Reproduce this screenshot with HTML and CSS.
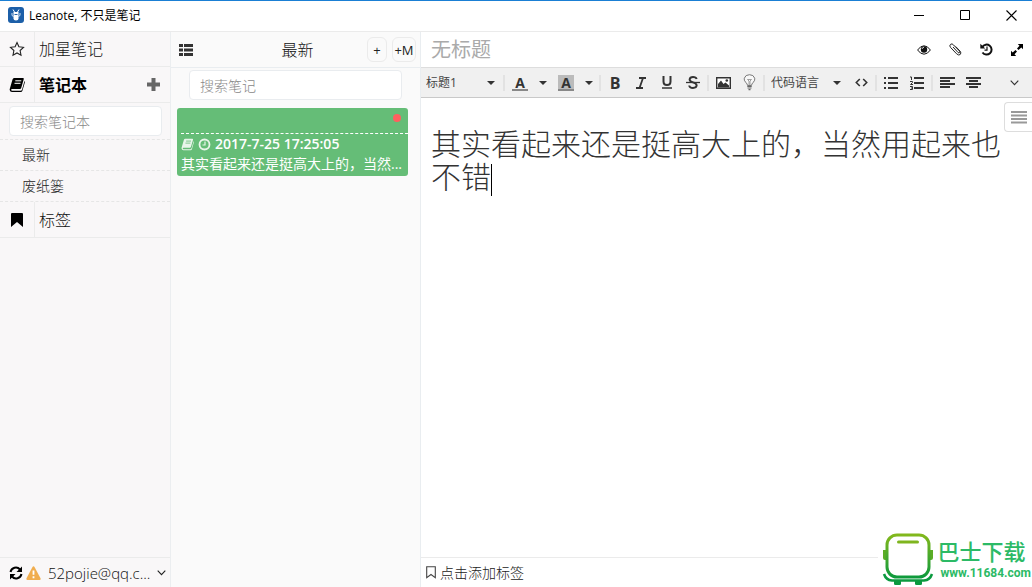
FILE: index.html
```html
<!DOCTYPE html>
<html lang="zh-CN">
<head>
<meta charset="utf-8">
<title>Leanote, 不只是笔记</title>
<link rel="stylesheet" href="styles.css">
</head>
<body>
<div class="app">
  <header class="titlebar">
    <svg class="app-logo" width="16" height="16" viewBox="0 0 16 16"><rect width="16" height="16" rx="3" fill="#1c5fa8"/><path d="M5 2.500l1.500 2.500M11 2.500l-1.500 2.500" stroke="#fff" stroke-width="1"/><path d="M5.500 5h5v6.500q0 2-2.500 2t-2.500-2z" fill="#fff"/><path d="M4 6v2.500l1.500 1M12 6v2.500l-1.500 1" fill="none" stroke="#fff" stroke-width=".8"/><path d="M6.500 7.500h3" stroke="#1c5fa8"/></svg>
    <h1 class="app-name">Leanote, 不只是笔记</h1>
    <div class="win-btns">
      <button class="win-btn" aria-label="最小化"><svg width="11" height="11"><path d="M0 5.500h10" stroke="#000"/></svg></button>
      <button class="win-btn" aria-label="最大化"><svg width="11" height="11"><path d="M.5.500h9v9h-9z" fill="none" stroke="#000"/></svg></button>
      <button class="win-btn" aria-label="关闭"><svg width="11" height="11"><path d="M.5.500l10 10M10.500.500l-10 10" stroke="#000" stroke-width="1.100"/></svg></button>
    </div>
  </header>

  <div class="columns">
    <nav class="sidebar">
      <div class="nav-row">
        <span class="nav-icon"><svg width="16" height="16" viewBox="0 0 16 16"><path d="M8 1.500l1.900 4.300 4.600.5-3.400 3.200.9 4.700L8 11.900l-4 2.300.9-4.700L1.500 6.300l4.600-.5z" fill="none" stroke="#222" stroke-width="1.100"/></svg></span>
        <a class="nav-label" href="#">加星笔记</a>
      </div>
      <div class="nav-row nav-row-active">
        <span class="nav-icon"><svg width="16" height="16" viewBox="0 0 16 16"><path d="M5 1h9q1 0 .8 1l-2.600 9q-.3 1-1.300 1H3q-1 .2-.8 1t1 .7h8.500q1 0 1.300-1L15.500 4q.6.500.4 1.200l-2.500 8.500q-.4 1.300-1.700 1.300H3q-2 0-2.300-2-.1-.7.100-1.300L3.500 2.500Q4 1 5 1z" fill="#000"/><path d="M6.300 3.800h6M5.500 6.300h6" stroke="#fff"/></svg></span>
        <a class="nav-label" href="#">笔记本</a>
        <button class="add-btn" aria-label="新建笔记本"><svg width="13" height="13"><path d="M4.500 0h4v4.500H13v4H8.500V13h-4V8.500H0v-4h4.500z" fill="#666"/></svg></button>
      </div>
      <div class="notebook-search"><input class="search" type="text" placeholder="搜索笔记本" aria-label="搜索笔记本"></div>
      <a class="notebook" href="#">最新</a>
      <a class="notebook" href="#">废纸篓</a>
      <div class="nav-row">
        <span class="nav-icon"><svg width="12" height="14"><path d="M1 0h10q1 0 1 1v13L6 9l-6 5V1q0-1 1-1z" fill="#000"/></svg></span>
        <a class="nav-label" href="#">标签</a>
      </div>
      <div class="account">
        <button class="icon-btn" aria-label="同步"><svg width="14" height="14" viewBox="0 0 14 14"><path d="M1.500 6A5.500 5.500 0 0 1 11 3.500M12.500 8A5.500 5.500 0 0 1 3 10.500" fill="none" stroke="#000" stroke-width="2"/><path d="M13 .5V6H7.500zM1 13.500V8h5.500z" fill="#000"/></svg></button>
        <svg width="15" height="14" viewBox="0 0 15 14"><path d="M7.500.3q.6 0 1 .7l6 11.300q.6 1.500-1 1.700h-12Q0 13.800.5 12.300L6.500 1q.4-.7 1-.7z" fill="#f0ad4e"/><path d="M7.500 4.500v4.300M7.500 10.200v2" stroke="#fff" stroke-width="1.800"/></svg>
        <span class="account-name">52pojie@qq.c...</span>
        <button class="icon-btn" aria-label="账户菜单"><svg width="9" height="6"><path d="M.7.700l3.800 4L8.300.700" fill="none" stroke="#222" stroke-width="1.100"/></svg></button>
      </div>
    </nav>

    <section class="notes">
      <div class="notes-head">
        <button class="icon-btn view-btn" aria-label="列表视图"><svg width="14" height="12"><path d="M0 0h4v3H0zM5 0h9v3H5zM0 4.500h4v3H0zM5 4.500h9v3H5zM0 9h4v3H0zM5 9h9v3H5z" fill="#333"/></svg></button>
        <h2 class="notes-title">最新</h2>
        <div class="new-btns">
          <button class="new-btn">+</button>
          <button class="new-btn new-btn-md">+M</button>
        </div>
      </div>
      <div class="notes-search"><input class="search" type="text" placeholder="搜索笔记" aria-label="搜索笔记"></div>
      <article class="note">
        <div class="note-title"><span class="unsynced"></span></div>
        <p class="note-date">
          <svg width="13" height="13" viewBox="0 0 16 16"><path d="M5 1h9q1 0 .8 1l-2.600 9q-.3 1-1.300 1H3q-1 .2-.8 1t1 .7h8.500q1 0 1.300-1L15.500 4q.6.500.4 1.200l-2.500 8.500q-.4 1.300-1.700 1.300H3q-2 0-2.300-2-.1-.7.100-1.300L3.500 2.500Q4 1 5 1z" fill="#e8f5ea"/><path d="M6.300 3.800h6M5.500 6.300h6" stroke="#65bd77"/></svg>
          <svg width="13" height="13"><circle cx="6.500" cy="6.500" r="5" fill="none" stroke="#e8f5ea" stroke-width="1.800"/><path d="M7 3.500V7H4.500" fill="none" stroke="#e8f5ea" stroke-width="1.200"/></svg>
          <time>2017-7-25 17:25:05</time>
        </p>
        <p class="note-text">其实看起来还是挺高大上的，当然...</p>
      </article>
    </section>

    <main class="editor">
      <div class="editor-head">
        <input class="title-input" type="text" placeholder="无标题" aria-label="标题">
        <div class="head-btns">
          <button class="head-btn" aria-label="预览"><svg width="14" height="10" viewBox="0 0 14 10"><path d="M.6 5Q3.500.8 7 .8T13.400 5Q10.500 9.200 7 9.200T.6 5z" fill="#fff" stroke="#111" stroke-width="1"/><circle cx="7" cy="4.500" r="3.200" fill="#111"/><path d="M5 4q.3-1.600 2-1.700" fill="none" stroke="#fff" stroke-width=".8"/></svg></button>
          <button class="head-btn" aria-label="附件"><svg width="13" height="13" viewBox="0 0 13 13"><path d="M4 4l5 5.500q1 .8 1.600.1t-.1-1.500L4.600 2Q3-.0 1.500 1.400t.1 3.100l6 6.300q1.900 1.900 3.500.8 1.700-1.600-.1-3.500L6.700 3.500" fill="none" stroke="#222" stroke-width="1"/></svg></button>
          <button class="head-btn" aria-label="历史"><svg width="13" height="13" viewBox="0 0 13 13"><path d="M2.300 4A5 5 0 1 1 2.500 9.500" fill="none" stroke="#111" stroke-width="2"/><path d="M.3.700V5.500h5z" fill="#111"/><path d="M7 3.500V7.200H4.500" fill="none" stroke="#111" stroke-width="1.200"/></svg></button>
          <button class="head-btn" aria-label="全屏"><svg width="12" height="12"><path d="M12 0v5.200L10.300 3.500 7.500 6 6 4.500 8.500 1.700 6.800 0zM0 12V6.800l1.700 1.700L4.500 6 6 7.500l-2.500 2.800L5.200 12z" fill="#000"/></svg></button>
        </div>
      </div>

      <div class="toolbar">
        <label class="pick"><select class="pick-select" aria-label="段落格式"><option>标题1</option></select><i class="caret"></i></label>
        <i class="sep"></i>
        <button class="tool tool-color" aria-label="文字颜色"><span class="swatch">A</span></button>
        <button class="drop" aria-label="选择文字颜色"><i class="caret"></i></button>
        <button class="tool tool-color" aria-label="背景颜色"><span class="swatch swatch-fill">A</span></button>
        <button class="drop" aria-label="选择背景颜色"><i class="caret"></i></button>
        <i class="sep"></i>
        <button class="tool bold">B</button>
        <button class="tool italic" aria-label="斜体"><svg width="12" height="12"><path d="M4 1h7M1 11h7M8 1L4.500 11" stroke="#333" stroke-width="1.800"/></svg></button>
        <button class="tool" aria-label="下划线"><svg width="12" height="13"><path d="M2.500 0v5.500Q2.500 9 6 9t3.500-3.500V0" fill="none" stroke="#333" stroke-width="2"/><path d="M1 12h10" stroke="#333" stroke-width="1.500"/></svg></button>
        <button class="tool" aria-label="删除线"><svg width="14" height="13"><path d="M10.700 3Q10 1 7 1T3.600 3.500Q3.600 5.500 7 6.300T10.700 9.300Q10.500 12 7 12T3.200 9.500" fill="none" stroke="#333" stroke-width="1.900"/><path d="M0 6.500h14" stroke="#333" stroke-width="1.300"/></svg></button>
        <i class="sep"></i>
        <button class="tool" aria-label="图片"><svg width="15" height="12"><path d="M.7.700h13.600v10.600H.7z" fill="#fff" stroke="#333" stroke-width="1.400"/><path d="M2 10.500V7l3-3.500L7.500 7 9.500 5.500l3.500 3v2z" fill="#333"/><circle cx="10.800" cy="3.500" r="1.300" fill="#333"/></svg></button>
        <button class="tool" aria-label="提示"><svg width="13" height="17" viewBox="0 0 13 17"><path d="M4.500 11.500Q4.500 10 2.700 8.300.7 6.200 1.300 4.200 2.400.7 6.500.7t5.200 3.500q.6 2-1.400 4.100-1.800 1.700-1.800 3.200z" fill="#f8f8f8" stroke="#777"/><path d="M6 11V7L4.500 5.500h4L7 7v4" fill="none" stroke="#888" stroke-width=".8"/><path d="M4.300 12.500h4.400M4.500 14h4M5.500 15.700h2" stroke="#666" stroke-width="1.200"/></svg></button>
        <i class="sep"></i>
        <label class="pick pick-lang"><select class="pick-select" aria-label="代码语言"><option>代码语言</option></select><i class="caret"></i></label>
        <button class="tool" aria-label="代码"><svg width="13" height="9"><path d="M4.800 1L1.300 4.500l3.500 3.500M8.200 1l3.500 3.500L8.200 8" fill="none" stroke="#333" stroke-width="1.600"/></svg></button>
        <i class="sep"></i>
        <button class="tool" aria-label="无序列表"><svg width="14" height="12"><path d="M0 1h2M4 1h10M0 6h2M4 6h10M0 11h2M4 11h10" stroke="#333" stroke-width="2"/></svg></button>
        <button class="tool" aria-label="有序列表"><svg width="14" height="14"><path d="M4 2h10M4 7h10M4 12h10" stroke="#333" stroke-width="2"/><path d="M0 1h1.500v3M0 5.500h2.500v1L.5 8.500h2.500M0 10.500h2.500v3H0M1 12h1.500" fill="none" stroke="#333"/></svg></button>
        <i class="sep"></i>
        <button class="tool" aria-label="左对齐"><svg width="15" height="11"><path d="M0 1h15M0 4h10M0 7h15M0 10h10" stroke="#333" stroke-width="2"/></svg></button>
        <button class="tool" aria-label="居中"><svg width="15" height="11"><path d="M0 1h15M3 4h9M0 7h15M3 10h9" stroke="#333" stroke-width="2"/></svg></button>
        <button class="tool more" aria-label="更多"><svg width="9" height="6"><path d="M.7.700l3.800 4L8.300.700" fill="none" stroke="#333" stroke-width="1.100"/></svg></button>
      </div>

      <div class="page">
        <h1 class="page-text" contenteditable="true">其实看起来还是挺高大上的，当然用起来也不错<span class="cursor"></span></h1>
        <button class="outline-btn" aria-label="大纲"><svg width="16" height="14"><path d="M0 2h16M0 5.500h16M0 9h16M0 12.500h16" stroke="#999" stroke-width="2"/></svg></button>
      </div>

      <footer class="tags">
        <svg width="10" height="13"><path d="M.7.700h8.600v11L5 8.500.7 11.700z" fill="none" stroke="#444" stroke-width="1.100"/></svg>
        <a class="tags-add" href="#">点击添加标签</a>
      </footer>
    </main>
  </div>

  <aside class="badge">
    <svg width="52" height="54" viewBox="0 0 52 54">
      <defs><linearGradient id="bus" x1="0" y1="0" x2="0" y2="1"><stop offset="0" stop-color="#82b81c"/><stop offset="1" stop-color="#0e9a3c"/></linearGradient></defs>
      <path d="M1 17h4v10H3q-2 0-2-2zM47 17h4v8q0 2-2 2h-2z" fill="#5cad25"/>
      <path d="M2 41q2 6 8 6.500h32q6-.5 8-6.500" fill="none" stroke="#0b9a3f" stroke-width="2.500"/>
      <path d="M12 48h7v3q0 1-1.500 1h-4Q12 52 12 51zM33 48h7v3q0 1-1.500 1h-4Q33 52 33 51z" fill="#0b9a3f"/>
      <rect x="5" y="2" width="42" height="42" rx="10" fill="#fff" stroke="url(#bus)" stroke-width="3"/>
      <path d="M16.500 9h19" stroke="#7fb51e" stroke-width="3" stroke-linecap="round"/>
    </svg>
    <div class="badge-text"><strong class="badge-name">巴士下载</strong><span class="badge-url">www.11684.com</span></div>
  </aside>
</div>
</body>
</html>
```

FILE: styles.css
```css
* { box-sizing: border-box; }
body, h1, h2, p { margin: 0; }
body, button, input, select { font-family: "Open Sans", "Noto Sans CJK SC", sans-serif; }
button { display: flex; align-items: center; justify-content: center; padding: 0; border: 0; background: none; color: #222; }
a { color: inherit; text-decoration: none; }
svg { display: block; flex: none; }

.app { position: relative; display: flex; flex-direction: column; height: 100vh; overflow: hidden; background: #fff; }

.titlebar { display: flex; align-items: flex-start; flex: none; height: 31px; padding-left: 8px; border-top: 1px solid #1a7fd4; }
.app-logo { margin-top: 6px; }
.app-name { flex: 1; margin-left: 5px; font-size: 12px; font-weight: 400; line-height: 29px; color: #000; }
.win-btns { display: flex; gap: 4px; }
.win-btn { width: 42px; height: 29px; }

.columns { display: grid; grid-template-columns: 171px 250px 1fr; flex: 1; min-height: 0; border-top: 1px solid #ebebeb; }

.sidebar { display: flex; flex-direction: column; border-right: 1px solid #ebeef0; background: #f9f7f8; }
.nav-row { display: flex; align-items: center; flex: none; height: 36px; border-bottom: 1px solid #ebebeb; }
.nav-row:first-child { height: 35px; }
.nav-icon { display: flex; align-items: center; justify-content: center; align-self: stretch; width: 35px; border-right: 1px solid #ebebeb; }
.nav-label { flex: 1; padding-left: 4px; font-size: 16px; font-weight: 300; line-height: 24px; color: #111; }
.nav-row-active .nav-label { font-weight: 700; color: #000; }
.add-btn { width: 34px; height: 34px; }
.search { display: block; width: 100%; height: 30px; padding: 0 10px; border: 1px solid #e9ecef; border-radius: 4px; background: #fff; font-size: 14px; font-weight: 300; }
.search::placeholder { color: #888; opacity: 1; }
.notebook-search { padding: 3px 8px 3px 9px; border-bottom: 1px dashed #e6e6e6; }
.notebook { height: 31px; padding-left: 22px; border-bottom: 1px dashed #e6e6e6; font-size: 14px; font-weight: 300; line-height: 30px; color: #222; }
.account { display: flex; align-items: center; gap: 3px; height: 30px; margin-top: auto; padding: 0 4px 0 9px; border-top: 1px solid #ebebeb; }
.account-name { flex: 1; margin-left: 4px; font-size: 15px; font-weight: 300; line-height: 28px; color: #111; white-space: nowrap; }

.notes { min-width: 0; border-right: 1px solid #e9edf0; background: #fafafa; }
.notes-head { display: grid; grid-template-columns: 1fr auto 1fr; align-items: center; height: 36px; padding: 0 4px 0 8px; border-bottom: 1px solid #e9edf0; }
.view-btn { justify-self: start; }
.notes-title { font-size: 16px; font-weight: 300; line-height: 24px; color: #111; }
.new-btns { display: flex; justify-content: flex-end; gap: 5px; }
.new-btn { width: 20px; height: 25px; border: 1px solid #ebebeb; border-radius: 6px; font-size: 13px; }
.new-btn-md { width: 24px; }
.notes-search { padding: 2px 18px; }
.note { margin: 6px 12px 0 6px; padding: 0 0 3px 4px; border-radius: 3px; background: #65bd77; color: #fff; }
.note-title { display: flex; justify-content: flex-end; height: 26px; padding: 6px 7px; border-bottom: 1px dashed #fff; }
.unsynced { width: 8px; height: 8px; border-radius: 50%; background: #ff5f5f; }
.note-date { display: flex; align-items: center; gap: 4px; height: 20px; font-size: 14px; font-weight: 600; line-height: 20px; }
.note-text { font-size: 14px; line-height: 19px; white-space: nowrap; }

.editor { display: flex; flex-direction: column; min-width: 0; background: #fff; }
.editor-head { display: flex; align-items: center; flex: none; height: 35px; }
.title-input { flex: 1; min-width: 0; height: 34px; padding: 0 10px; border: 0; background: none; font-size: 20px; }
.title-input::placeholder { color: #aaa; opacity: 1; }
.head-btns { display: flex; gap: 1px; }
.head-btn { width: 30px; height: 30px; }

.toolbar { display: flex; align-items: center; flex: none; height: 31px; border: solid #ddd; border-width: 1px 0; border-bottom-color: #c9c9c9; background: #f0f0f0; }
.pick { display: grid; grid-template-columns: 1fr 15px; align-items: center; width: 81px; }
.pick-lang { width: 82px; }
.pick-select { grid-area: 1 / 1 / 2 / 3; width: 100%; height: 26px; padding: 0 0 0 5px; border: 0; background: none; appearance: none; font-size: 12px; color: #444; }
.caret { justify-self: start; border: 4px solid transparent; border-top-color: #333; border-bottom: 0; pointer-events: none; }
.pick .caret { grid-area: 1 / 2; }
.sep { width: 2px; height: 16px; margin: 0 1px; background: #e2e2e2; }
.tool { width: 26px; height: 28px; color: #333; }
.tool-color { width: 28px; }
.drop { width: 18px; height: 28px; }
.swatch { width: 16px; height: 16px; border-bottom: 2px solid #888; font-size: 14px; font-weight: 700; line-height: 16px; }
.swatch-fill { background: #bbb; }
.bold { font-size: 16px; font-weight: 700; }
.more { width: 36px; margin-left: auto; }

.page { display: flex; align-items: flex-start; flex: 1; min-height: 0; }
.page-text { flex: 1; padding: 28px 0 0 10px; outline: 0; font-family: "Noto Sans CJK SC", sans-serif; font-size: 30px; font-weight: 300; line-height: 33px; color: #333; }
.cursor { display: inline-block; width: 1px; height: 32px; background: #000; vertical-align: middle; }
.outline-btn { width: 28px; height: 30px; margin-top: 4px; border: 1px solid #ddd; border-right: 0; border-radius: 4px 0 0 4px; }
.tags { display: flex; align-items: center; gap: 4px; flex: none; height: 30px; padding-left: 5px; border-top: 1px solid #ebebeb; }
.tags-add { font-size: 14px; font-weight: 300; line-height: 28px; color: #222; }

.badge { position: absolute; right: 0; bottom: 0; display: flex; align-items: center; gap: 3px; padding: 0 1px 0 4px; background: #fff; }
.badge-text { display: flex; flex-direction: column; }
.badge-name { font-size: 22px; font-weight: 500; line-height: 26px; color: #2cba66; }
.badge-url { padding-left: 3px; font-family: Roboto, sans-serif; font-size: 12px; font-weight: 700; line-height: 18px; color: #2cba66; }
```
